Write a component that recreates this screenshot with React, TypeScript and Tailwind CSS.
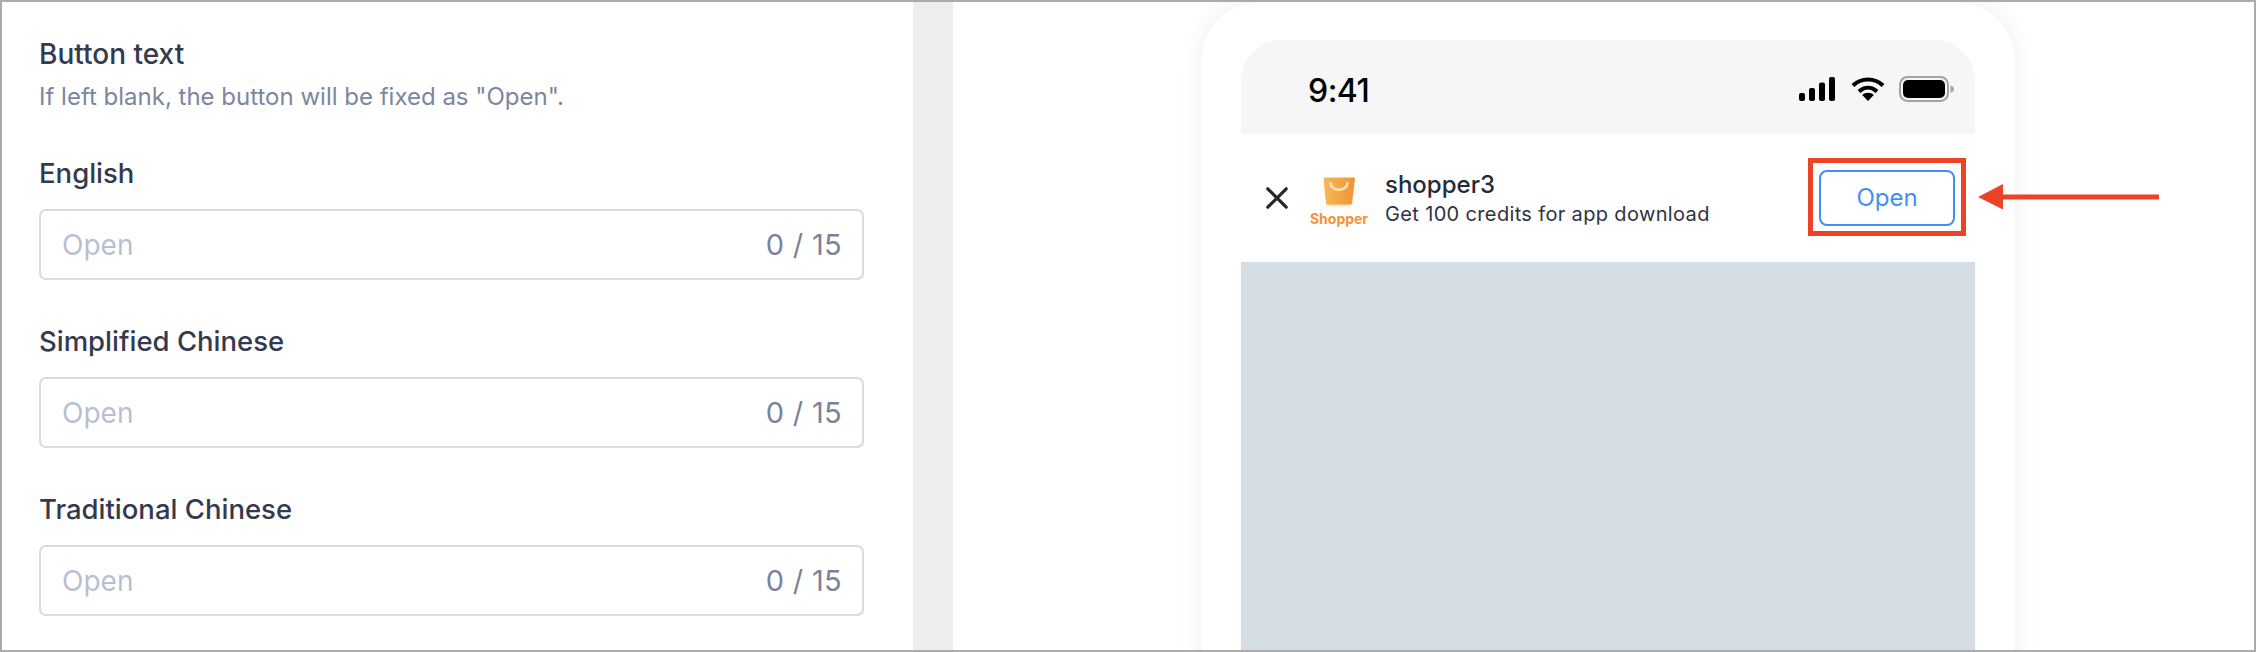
function TextField({ label }: { label: string }) {
  return (
    <div className="flex flex-col">
      <label className="h-[36px] text-[27.5px] leading-[36px] font-medium text-[#343a4e]">{label}</label>
      <div className="mt-[18px] flex h-[71px] items-center justify-between rounded-[7px] border-2 border-[#dadbde] pl-[21px] pr-[20px]">
        <input
          readOnly
          placeholder="Open"
          className="min-w-0 flex-1 bg-transparent text-[28px] outline-none placeholder:text-[#b8bfd0]"
        />
        <span className="text-[29px] tracking-[0.3px] text-[#7a8499]">0 / 15</span>
      </div>
    </div>
  );
}

function StatusIcons() {
  return (
    <div className="flex items-center">
      <svg width="36" height="24" viewBox="0 0 36 24" fill="#000">
        <rect x="0" y="16" width="6" height="8" rx="2" />
        <rect x="10" y="11" width="6" height="13" rx="2" />
        <rect x="20" y="5.5" width="6" height="18.5" rx="2" />
        <rect x="30" y="0" width="6" height="24" rx="2" />
      </svg>
      <svg className="ml-[16px]" width="34" height="24" viewBox="0 0 34 24" fill="none" stroke="#000" strokeWidth="4.2">
        <path d="M2 8.5C10.5 .5 23.5 .5 32 8.5" />
        <path d="M8 14.5C13.5 9.5 20.5 9.5 26 14.5" />
        <path d="M17 24L11.2 18C14.5 15 19.5 15 22.8 18Z" fill="#000" stroke="none" />
      </svg>
      <svg className="ml-[14px]" width="55" height="26" viewBox="0 0 55 26">
        <rect x="1" y="1" width="48" height="24" rx="7.5" fill="none" stroke="#a3a3a3" strokeWidth="2" />
        <rect x="4" y="4" width="42" height="18" rx="5" fill="#000" />
        <path d="M51.5 9.5C54 10 55 11.5 55 13S54 16 51.5 16.5Z" fill="#a3a3a3" />
      </svg>
    </div>
  );
}

function ShopperLogo() {
  return (
    <div className="flex w-[60px] shrink-0 flex-col items-center pt-[8px]">
      <svg width="40" height="34" viewBox="0 0 40 34">
        <defs>
          <linearGradient id="bag" x1="0" x2="1" y1="0" y2="0">
            <stop offset="0" stopColor="#f8b95a" />
            <stop offset="1" stopColor="#ef9330" />
          </linearGradient>
          <filter id="glow" x="-30%" y="-30%" width="160%" height="160%">
            <feGaussianBlur stdDeviation="1.6" />
          </filter>
        </defs>
        <path d="M6 6H34L31.5 29H8.5Z" fill="#f7b15a" opacity="0.5" filter="url(#glow)" />
        <path d="M4.5 1.5Q4.5 .5 5.5 .5H35Q36 .5 36 1.5L33 26Q33 27.5 31.5 27.5H8.5Q7 27.5 7 26Z" fill="url(#bag)" />
        <path d="M11.5 6C12.5 15 27.5 15 28.5 6" fill="none" stroke="#fbe3bd" strokeWidth="2.6" strokeLinecap="round" />
      </svg>
      <span className="mt-[-1px] text-[14px] leading-[18px] font-bold text-[#f59139]">Shopper</span>
    </div>
  );
}

function Banner() {
  return (
    <div className="relative flex h-[128px] items-center bg-white pl-[25px]">
      <svg className="shrink-0" width="22" height="22" viewBox="0 0 22 22" stroke="#26272b" strokeWidth="3.2" strokeLinecap="round">
        <path d="M1.8 1.8L20.2 20.2M20.2 1.8L1.8 20.2" />
      </svg>
      <div className="ml-[21px]">
        <ShopperLogo />
      </div>
      <div className="ml-[16px] flex flex-col pt-[1px]">
        <span className="text-[24px] leading-[30px] font-medium text-[#262b3a]">shopper3</span>
        <span className="text-[20px] leading-[28px] tracking-[0.35px] text-[#2e3342]">Get 100 credits for app download</span>
      </div>
      <button className="ml-auto mr-[20px] flex h-[56px] w-[136px] items-center justify-center rounded-[8px] border-2 border-[#3f8ff7] text-[24px] text-[#3f8ff7]">
        Open
      </button>
      {/* Annotation box round the button */}
      <div className="absolute left-[567px] top-[24px] h-[78px] w-[158px] border-[5px] border-[#ea4325]" />
    </div>
  );
}

function Phone() {
  return (
    <div className="h-[700px] w-[814px] rounded-t-[60px] bg-white px-[40px] pt-[38px] shadow-[0_0_24px_rgba(0,0,0,0.07)]">
      <div className="flex h-full flex-col overflow-hidden rounded-t-[40px]">
        <div className="flex h-[94px] shrink-0 items-center justify-between bg-[#f6f6f6] pl-[67px] pr-[21px]">
          <span className="pt-[8px] text-[32px] leading-none font-medium tracking-[-0.5px] text-black">9:41</span>
          <div className="pt-[3px]">
            <StatusIcons />
          </div>
        </div>
        <Banner />
        <div className="flex-1 bg-[#d5dde5]" />
      </div>
    </div>
  );
}

export default function App() {
  return (
    <div className="flex h-[652px] w-[2256px] overflow-hidden border-2 border-[#ababab] bg-white font-['Inter',sans-serif]">
      {/* Form column */}
      <div className="w-[911px] shrink-0 pl-[37px] pr-[49px] pt-[34px]">
        <div className="text-[28px] leading-[36px] font-medium text-[#343a4e]">Button text</div>
        <div className="mt-[9px] text-[24px] leading-[32px] text-[#7c869e]">If left blank, the button will be fixed as "Open".</div>
        <div className="mt-[42px] flex flex-col gap-[43px]">
          <TextField label="English" />
          <TextField label="Simplified Chinese" />
          <TextField label="Traditional Chinese" />
        </div>
      </div>

      <div className="w-[40px] shrink-0 bg-[#ecedef]" />

      {/* Preview column */}
      <div className="relative flex-1 overflow-hidden pl-[248px]">
        <Phone />
        {/* Annotation arrow */}
        <svg className="absolute left-[1025px] top-[182px]" width="182" height="27" viewBox="0 0 182 27">
          <path d="M0 13L25 0V25.5Z" fill="#ea4325" />
          <rect x="24" y="10.5" width="157" height="5" fill="#ea4325" />
        </svg>
      </div>
    </div>
  );
}
